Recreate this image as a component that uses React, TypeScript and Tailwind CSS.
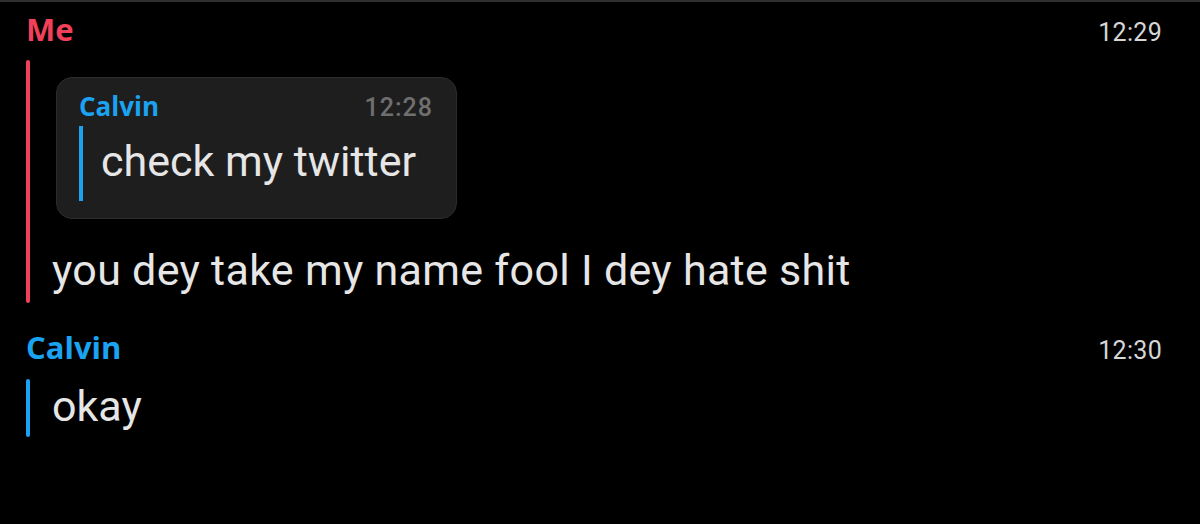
import React from "react";

export default function App() {
  return (
    <div className="w-[1200px] h-[524px] bg-black border-t-2 border-[#2e2e2e] font-['Roboto',sans-serif] overflow-hidden">
      <div className="pl-[26px] pr-[38px] pt-[7px]">
        {/* Header Me */}
        <div className="flex items-baseline justify-between h-[40px]">
          <span className="font-['Open_Sans',sans-serif] text-[31px] leading-[40px] font-bold text-[#f2405a]">Me</span>
          <span className="text-[25px] leading-[40px] text-[#d6d6d6] tracking-[0.3px]">12:29</span>
        </div>

        {/* Me message block */}
        <div className="flex mt-[11px]">
          <div className="w-[4px] rounded-full bg-[#f2405a]" />
          <div className="pl-[22px] pt-[17px] pb-[9px]">
            <div className="ml-[4px] w-[401px] h-[142px] rounded-[16px] bg-[#1e1e1f] border border-[#2c2c2d] pl-[22px] pr-[23px] pt-[13px]">
              <div className="flex items-baseline justify-between h-[30px]">
                <span className="font-['Open_Sans',sans-serif] text-[26px] leading-[30px] font-bold text-[#1ba3f1]">Calvin</span>
                <span className="text-[25px] leading-[30px] font-medium text-[#6f6f6f] tracking-[1px]">12:28</span>
              </div>
              <div className="flex mt-[5px] h-[75px]">
                <div className="w-[4px] bg-[#1ba3f1]" />
                <span className="ml-[18px] text-[43px] leading-[71px] text-[#e6e6e6]">check my twitter</span>
              </div>
            </div>
            <div className="mt-[27px] text-[43px] leading-[48px] text-[#e6e6e6] whitespace-nowrap tracking-[0.3px]">
              you dey take my name fool I dey hate shit
            </div>
          </div>
        </div>

        {/* Header Calvin */}
        <div className="flex items-baseline justify-between h-[40px] mt-[24px]">
          <span className="font-['Open_Sans',sans-serif] text-[31px] leading-[40px] font-bold text-[#1ba3f1]">Calvin</span>
          <span className="text-[25px] leading-[40px] text-[#d6d6d6] tracking-[0.3px]">12:30</span>
        </div>

        {/* Calvin message */}
        <div className="flex mt-[12px] h-[58px]">
          <div className="w-[4px] rounded-full bg-[#1ba3f1]" />
          <span className="ml-[22px] text-[43px] leading-[55px] text-[#e6e6e6]">okay</span>
        </div>
      </div>
    </div>
  );
}
